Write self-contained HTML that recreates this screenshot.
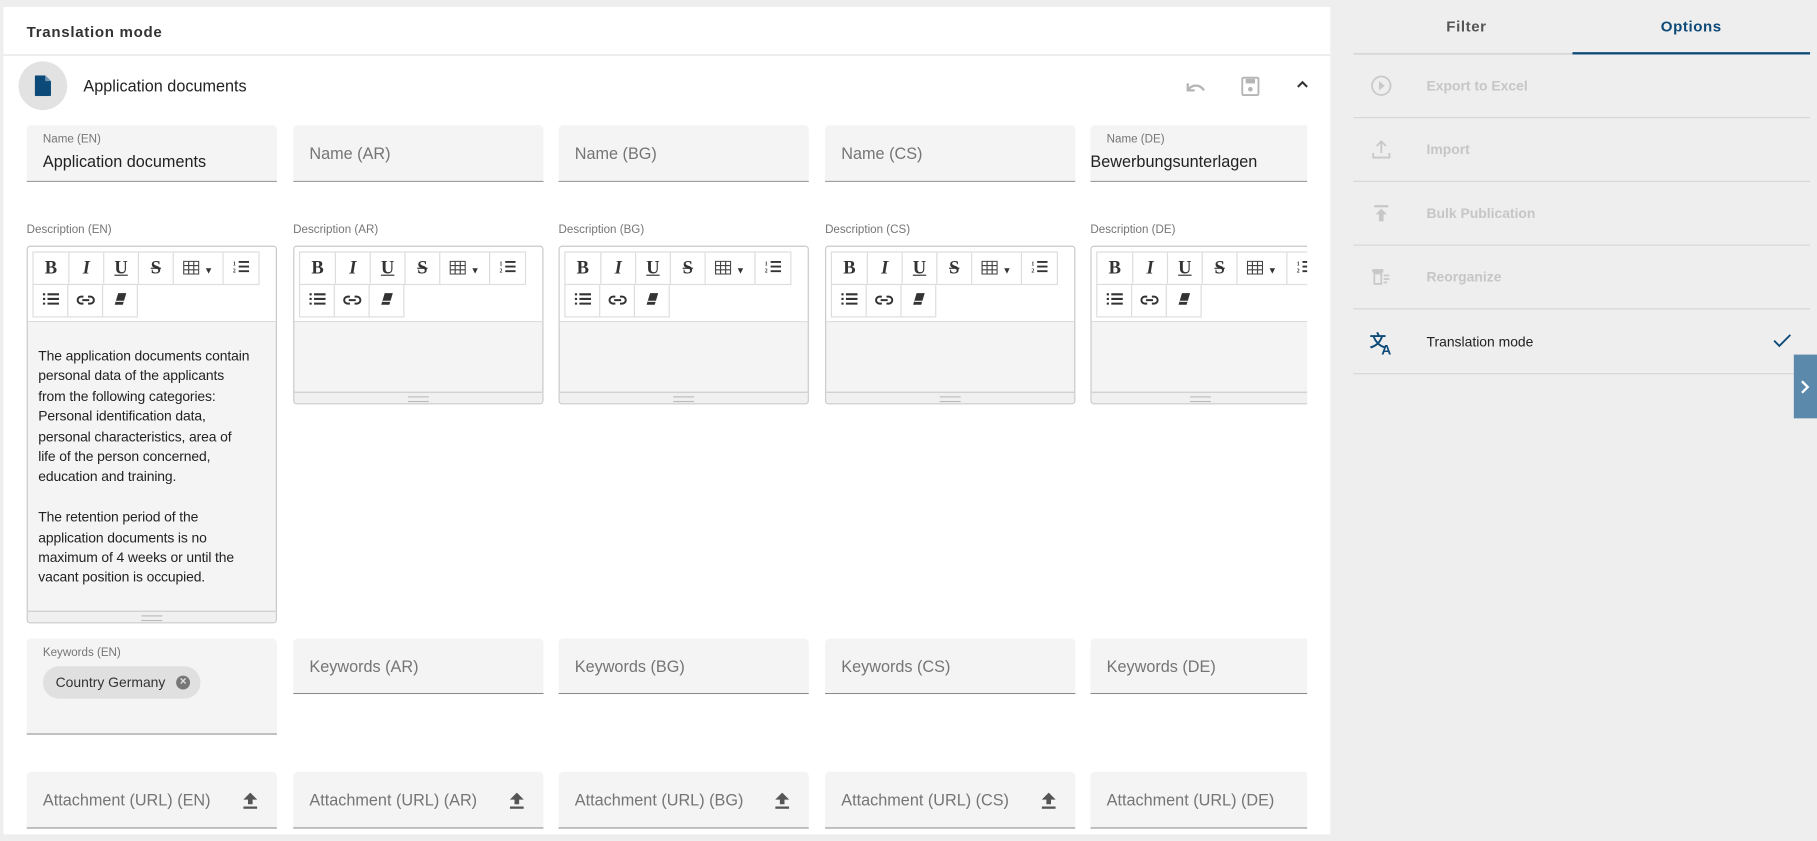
<!DOCTYPE html>
<html><head><meta charset="utf-8"><style>
*{box-sizing:border-box;margin:0;padding:0}
html,body{width:1817px;height:841px;overflow:hidden;background:#eeeeee}
#w{position:absolute;left:0;top:0;width:1568px;height:726px;transform:scale(1.15880);transform-origin:0 0;font-family:"Liberation Sans",sans-serif;}
.a{position:absolute}
.panel{left:3px;top:6px;width:1145px;height:714px;background:#fff;overflow:hidden}
.fld{position:absolute;width:216px;background:#f4f4f4;border-bottom:1px solid #8a8a8a;border-radius:4px 4px 0 0;font-size:14px;color:#757575}
.fld .ph{position:absolute;left:14px;top:50%;transform:translateY(-50%)}
.lab{font-size:10px;color:#757575}
.ed{position:absolute;width:216px;border:1px solid #c8c8c8;border-radius:3px;background:#f4f4f4;overflow:hidden}
.tb{background:#fff;height:65px;border-bottom:1px solid #ddd;position:relative}
.bt{position:absolute;height:29px;border:1px solid #ddd;background:#fff;font-family:"Liberation Serif",serif;font-size:16px;font-weight:bold;color:#333;text-align:center;line-height:27px}
.rs{position:absolute;left:0;right:0;bottom:0;height:10px;border-top:1px solid #ccc;background:#f0f0f0}
.rs:after{content:"";position:absolute;left:50%;top:3px;width:18px;height:3px;margin-left:-9px;border-top:1px solid #bbb;border-bottom:1px solid #bbb}
.mi{position:absolute;left:1168px;width:394px;height:55px;border-bottom:1px solid #d6d6d6;font-size:12px;color:#c6c6c6;font-weight:bold}
.mi span{position:absolute;left:63px;top:50%;transform:translateY(-50%)}
.mi svg{position:absolute;left:14px;top:17px}
</style></head><body><div id="w">
<div class="a panel">
 <div class="a" style="left:20px;top:14px;font-size:13px;font-weight:bold;color:#333;letter-spacing:.6px">Translation mode</div>
 <div class="a" style="left:0;top:41px;width:1145px;height:1px;background:#e0e0e0"></div>
 <div class="a" style="left:13px;top:47px;width:42px;height:42px;border-radius:50%;background:#e2e2e2"></div>
 <svg class="a" style="left:27px;top:59px" width="14" height="18" viewBox="0 0 14 18"><path d="M1 0h8l5 5v12a1 1 0 0 1-1 1H1a1 1 0 0 1-1-1V1a1 1 0 0 1 1-1z" fill="#0b4a78"/><path d="M9 0v5h5" fill="#6f94b3"/></svg>
 <div class="a" style="left:69px;top:60px;font-size:14px;color:#222">Application documents</div>
 <svg class="a" style="left:1018px;top:62px" width="20" height="16" viewBox="0 0 20 16"><path d="M4 4v6h6M4 10c3-5 10-6 14 0" fill="none" stroke="#b5b5b5" stroke-width="2"/></svg>
 <svg class="a" style="left:1068px;top:60px" width="16" height="17" viewBox="0 0 16 17"><rect x="1" y="1" width="14" height="15" rx="1" fill="none" stroke="#b5b5b5" stroke-width="1.6"/><rect x="4" y="2" width="8" height="4" fill="#b5b5b5"/><circle cx="8" cy="11" r="2" fill="#b5b5b5"/></svg>
 <svg class="a" style="left:1115px;top:62px" width="12" height="8" viewBox="0 0 12 8"><path d="M2 7l4-4 4 4" fill="none" stroke="#333" stroke-width="1.8"/></svg>
 <div class="a" style="left:1150px;top:74px;width:4px;height:75px;background:#ddd;border-radius:2px"></div>
</div>
<div class="a" style="left:3px;top:6px;width:1125px;height:714px;overflow:hidden">
<div class="a" style="left:-3px;top:-6px;width:1140px;height:730px">
 <div class="fld" style="left:23px;top:108px;height:49px"><div class="a lab" style="left:14px;top:7px">Name (EN)</div><div class="a" style="left:14px;top:23px;color:#222;font-size:14px">Application documents</div></div>
 <div class="fld" style="left:253px;top:108px;height:49px"><div class="ph">Name (AR)</div></div>
 <div class="fld" style="left:482px;top:108px;height:49px"><div class="ph">Name (BG)</div></div>
 <div class="fld" style="left:712px;top:108px;height:49px"><div class="ph">Name (CS)</div></div>
 <div class="fld" style="left:941px;top:108px;height:49px"><div class="a lab" style="left:14px;top:7px">Name (DE)</div><div class="a" style="left:0;top:23px;color:#222;font-size:14px;white-space:nowrap">Bewerbungsunterlagen</div></div>
 <div class="a lab" style="left:23px;top:193px">Description (EN)</div>
 <div class="a lab" style="left:253px;top:193px">Description (AR)</div>
 <div class="a lab" style="left:482px;top:193px">Description (BG)</div>
 <div class="a lab" style="left:712px;top:193px">Description (CS)</div>
 <div class="a lab" style="left:941px;top:193px">Description (DE)</div>
 <div id="edtpl"></div>
 <div class="fld" style="left:23px;top:551px;height:83px"><div class="a lab" style="left:14px;top:7px">Keywords (EN)</div>
  <div class="a" style="left:14px;top:24px;width:136px;height:28px;border-radius:14px;background:#e0e0e0;font-size:12px;color:#333;line-height:28px;padding-left:11px">Country Germany<span class="a" style="left:115px;top:8px;width:12px;height:12px;border-radius:50%;background:#777;color:#e0e0e0;font-size:10px;line-height:12px;text-align:center;font-weight:bold">×</span></div></div>
 <div class="fld" style="left:253px;top:551px;height:48px"><div class="ph">Keywords (AR)</div></div>
 <div class="fld" style="left:482px;top:551px;height:48px"><div class="ph">Keywords (BG)</div></div>
 <div class="fld" style="left:712px;top:551px;height:48px"><div class="ph">Keywords (CS)</div></div>
 <div class="fld" style="left:941px;top:551px;height:48px"><div class="ph">Keywords (DE)</div></div>
 <div class="fld" style="left:23px;top:666px;height:49px"><div class="ph">Attachment (URL) (EN)</div><svg class="a" style="left:187px;top:18px" width="12" height="14" viewBox="0 0 12 14"><path d="M6 0L0 6h4v4h4V6h4z M0 12h12v2H0z" fill="#555"/></svg></div>
 <div class="fld" style="left:253px;top:666px;height:49px"><div class="ph">Attachment (URL) (AR)</div><svg class="a" style="left:187px;top:18px" width="12" height="14" viewBox="0 0 12 14"><path d="M6 0L0 6h4v4h4V6h4z M0 12h12v2H0z" fill="#555"/></svg></div>
 <div class="fld" style="left:482px;top:666px;height:49px"><div class="ph">Attachment (URL) (BG)</div><svg class="a" style="left:187px;top:18px" width="12" height="14" viewBox="0 0 12 14"><path d="M6 0L0 6h4v4h4V6h4z M0 12h12v2H0z" fill="#555"/></svg></div>
 <div class="fld" style="left:712px;top:666px;height:49px"><div class="ph">Attachment (URL) (CS)</div><svg class="a" style="left:187px;top:18px" width="12" height="14" viewBox="0 0 12 14"><path d="M6 0L0 6h4v4h4V6h4z M0 12h12v2H0z" fill="#555"/></svg></div>
 <div class="fld" style="left:941px;top:666px;height:49px"><div class="ph" style="white-space:nowrap">Attachment (URL) (DE)</div></div>
</div></div>
<div class="a" style="left:1168px;top:15px;width:195px;text-align:center;font-size:13px;font-weight:bold;color:#555;letter-spacing:.5px">Filter</div>
<div class="a" style="left:1357px;top:15px;width:205px;text-align:center;font-size:13px;font-weight:bold;color:#0d4a78;letter-spacing:.5px">Options</div>
<div class="a" style="left:1168px;top:46px;width:394px;height:1px;background:#ccc"></div>
<div class="a" style="left:1357px;top:45px;width:205px;height:2px;background:#0d4a78"></div>
<div class="mi" style="top:47px"><svg width="20" height="20" viewBox="0 0 20 20"><circle cx="10" cy="10" r="8" fill="none" stroke="#c8c8c8" stroke-width="1.5"/><path d="M8 6l5 4-5 4z" fill="#c8c8c8"/></svg><span>Export to Excel</span></div>
<div class="mi" style="top:102px"><svg width="20" height="20" viewBox="0 0 20 20"><path d="M10 3v10M6 7l4-4 4 4M3 13v4h14v-4" fill="none" stroke="#c8c8c8" stroke-width="1.6"/></svg><span>Import</span></div>
<div class="mi" style="top:157px"><svg width="20" height="20" viewBox="0 0 20 20"><path d="M4 3h12v2H4z M10 6l-5 5h3v6h4v-6h3z" fill="#c8c8c8"/></svg><span>Bulk Publication</span></div>
<div class="mi" style="top:212px"><svg width="20" height="20" viewBox="0 0 20 20"><path d="M3 4h8v1.5H3z M4 7h6v9H4z" fill="none" stroke="#c8c8c8" stroke-width="1.5"/><path d="M12 8h5v1.5h-5zM12 11h5v1.5h-5zM12 14h3v1.5h-3z" fill="#c8c8c8"/></svg><span>Reorganize</span></div>
<div class="mi" style="top:267px;height:56px"><svg width="22" height="22" viewBox="0 0 22 22" style="top:18px"><text x="0" y="14" font-size="14" font-family="Liberation Sans" font-weight="bold" fill="#0d4a78">文</text><text x="10" y="21" font-size="12" font-family="Liberation Sans" font-weight="bold" fill="#0d4a78">A</text></svg><span style="color:#222;font-weight:normal">Translation mode</span>
 <svg class="a" style="left:362px;top:21px" width="16" height="12" viewBox="0 0 16 12"><path d="M1 6l4.5 4.5L15 1" fill="none" stroke="#0d4a78" stroke-width="1.6"/></svg></div>
<div class="a" style="left:1548px;top:306px;width:20px;height:55px;background:#5b89ab"></div>
<svg class="a" style="left:1553px;top:328px" width="9" height="12" viewBox="0 0 9 12"><path d="M2 1l5 5-5 5" fill="none" stroke="#fff" stroke-width="2"/></svg>
</div>
<script>
var xs=[23,253,482,712,941];
var h='';
var tbl='<svg width="14" height="12" viewBox="0 0 14 12" style="vertical-align:-1px"><path d="M0.5 0.5h13v11h-13zM0.5 4.2h13M0.5 7.8h13M4.8 .5v11M9.2 .5v11" fill="none" stroke="#444"/></svg> <span style="font-size:8px">▼</span>';
var ol='<svg width="14" height="12" viewBox="0 0 14 12"><path d="M5 2h9M5 6h9M5 10h9" stroke="#333" stroke-width="1.6"/><text x="0" y="5" font-size="5" fill="#333">1</text><text x="0" y="11" font-size="5" fill="#333">2</text></svg>';
var ul='<svg width="14" height="12" viewBox="0 0 14 12"><path d="M4 2h10M4 6h10M4 10h10M0 2h2M0 6h2M0 10h2" stroke="#333" stroke-width="1.8"/></svg>';
var ln='<svg width="16" height="10" viewBox="0 0 16 10"><path d="M6 2H4a3 3 0 0 0 0 6h2M10 2h2a3 3 0 0 1 0 6h-2M5 5h6" fill="none" stroke="#333" stroke-width="1.7"/></svg>';
var er='<svg width="12" height="12" viewBox="0 0 12 12"><path d="M4 1h7l-3 10H1z" fill="#333"/><path d="M2 8h7" stroke="#fff" stroke-width="1"/></svg>';
xs.forEach(function(x,i){
 var H=i==0?326:137;
 h+='<div class="ed" style="left:'+x+'px;top:212px;height:'+H+'px'+(i==4?';width:190px':'')+'"><div class="tb">';
 var b=[['B',0,31],['<i>I</i>',31,30],['<u>U</u>',61,30],['<s>S</s>',91,30],[tbl,121,43],[ol,164,31]];
 b.forEach(function(q){h+='<div class="bt" style="left:'+(4+q[1])+'px;top:4px;width:'+(q[2]+1)+'px">'+q[0]+'</div>'});
 [[ul,0],[ln,30],[er,60]].forEach(function(q){h+='<div class="bt" style="left:'+(4+q[1])+'px;top:32px;width:31px">'+q[0]+'</div>'});
 h+='</div>';
 if(i==0)h+='<div style="padding:21px 10px 0 9px;width:205px;font-size:12px;line-height:17.4px;color:#222;letter-spacing:-0.1px">The application documents contain<br>personal data of the applicants<br>from the following categories:<br>Personal identification data,<br>personal characteristics, area of<br>life of the person concerned,<br>education and training.<br><br>The retention period of the<br>application documents is no<br>maximum of 4 weeks or until the<br>vacant position is occupied.</div>';
 h+='<div class="rs"></div></div>';
});
document.getElementById('edtpl').outerHTML=h;
</script>
</body></html>
